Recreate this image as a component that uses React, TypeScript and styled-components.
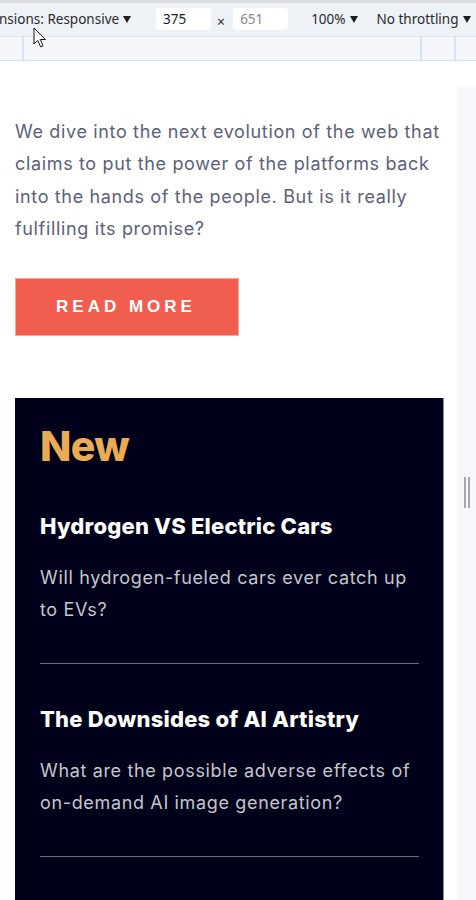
import React from "react";
import styled, { createGlobalStyle } from "styled-components";

const GlobalStyle = createGlobalStyle`
  html, body { margin: 0; padding: 0; background: #ffffff; }
  body { font-family: Inter, "Noto Sans", sans-serif; }
  * { box-sizing: border-box; }
`;

const Frame = styled.div`
  position: relative;
  width: 476px;
  height: 900px;
  overflow: hidden;
  display: flex;
  flex-direction: column;
  background: #ffffff;
`;

const DevToolbar = styled.div`
  height: 36px;
  flex: none;
  display: flex;
  align-items: center;
  background: #eef1f6;
  border-top: 3px solid #dadce0;
  font-family: "Noto Sans", "Open Sans", sans-serif;
  font-size: 13.5px;
  color: #2b2b2b;
  white-space: nowrap;
`;

const ToolLabel = styled.span<{ $ml?: number }>`
  display: inline-flex;
  align-items: center;
  gap: 4px;
  margin-left: ${(p) => p.$ml ?? 0}px;
  margin-top: -2px;
`;

const Caret = styled.span`
  width: 0;
  height: 0;
  border-left: 4.5px solid transparent;
  border-right: 4.5px solid transparent;
  border-top: 7px solid #1f1f1f;
  margin-top: 1px;
`;

const SizeInput = styled.span<{ $muted?: boolean; $ml: number }>`
  display: inline-flex;
  align-items: center;
  width: 55px;
  height: 22px;
  margin-left: ${(p) => p.$ml}px;
  margin-top: -2px;
  padding-left: 7px;
  background: #ffffff;
  border-radius: 4px;
  color: ${(p) => (p.$muted ? "#8a8a8a" : "#222")};
`;

const Times = styled.span`
  margin-left: 6px;
  margin-top: 4px;
  font-size: 14px;
  color: #333;
`;

const RulerBar = styled.div`
  height: 25px;
  flex: none;
  display: grid;
  grid-template-columns: 24px 398px 34px 1fr;
  background: #f4f6fb;
  border-top: 1px solid #dfe6f3;
  border-bottom: 1px solid #d3e1f8;
`;

const RulerCell = styled.div<{ $line?: boolean }>`
  border-right: ${(p) => (p.$line ? "2px solid #d6e4fb" : "none")};
`;

const Body = styled.div`
  flex: 1;
  display: flex;
  min-height: 0;
`;

const Page = styled.main`
  width: 457px;
  flex: none;
  padding: 55px 12px 0 15px;
  background: #ffffff;
`;

const SidePanel = styled.div`
  flex: 1;
  margin-top: 25px;
  background: #f7f8fc;
  display: flex;
  justify-content: center;
  padding-top: 391px;
`;

const Handle = styled.div`
  width: 6px;
  height: 31px;
  border-left: 2px solid #a7a7aa;
  border-right: 2px solid #a7a7aa;
`;

const Intro = styled.p`
  margin: 0;
  font-size: 18px;
  line-height: 32.4px;
  letter-spacing: 0.65px;
  color: #5d5f79;
  width: 430px;
`;

const ReadMore = styled.button`
  margin-top: 32px;
  width: 224px;
  height: 58px;
  border: 1px solid #f7a59c;
  background: #f15e50;
  color: #ffffff;
  font-family: "Liberation Sans", Arial, sans-serif;
  font-weight: 700;
  font-size: 17px;
  letter-spacing: 4px;
  padding: 0 2px 0 0;
  display: flex;
  align-items: center;
  justify-content: center;
`;

const NewPanel = styled.section`
  margin-top: 62px;
  width: 429px;
  background: #00001a;
  border-right: 1px solid #8e8e9c;
  padding: 24px 24px 0 25px;
  height: 520px;
`;

const NewTitle = styled.h2`
  margin: 0;
  font-size: 41px;
  line-height: 48px;
  font-weight: 800;
  color: #e9ab53;
  letter-spacing: -0.6px;
`;

const Item = styled.article<{ $first?: boolean }>`
  padding-top: ${(p) => (p.$first ? 43 : 42)}px;
  padding-bottom: 37px;
  border-bottom: 1px solid #6b6d82;
`;

const ItemTitle = styled.h3`
  margin: 0 0 22px;
  font-size: 22px;
  line-height: 27px;
  font-weight: 800;
  color: #ffffff;
  letter-spacing: 0.2px;
`;

const ItemText = styled.p`
  margin: 0;
  font-size: 18px;
  line-height: 32px;
  letter-spacing: 0.65px;
  color: #c5c6ce;
`;

const Cursor = styled.svg`
  position: absolute;
  left: 33px;
  top: 27px;
`;

const items = [
  {
    title: "Hydrogen VS Electric Cars",
    text: "Will hydrogen-fueled cars ever catch up to EVs?",
  },
  {
    title: "The Downsides of AI Artistry",
    text: "What are the possible adverse effects of on-demand AI image generation?",
  },
];

export default function App() {
  return (
    <>
      <GlobalStyle />
      <Frame>
        <DevToolbar>
          <ToolLabel $ml={-1}>
            nsions: Responsive <Caret />
          </ToolLabel>
          <SizeInput $ml={25}>375</SizeInput>
          <Times>×</Times>
          <SizeInput $ml={8} $muted>
            651
          </SizeInput>
          <ToolLabel $ml={23}>
            100% <Caret />
          </ToolLabel>
          <ToolLabel $ml={19}>
            No throttling <Caret />
          </ToolLabel>
        </DevToolbar>
        <RulerBar>
          <RulerCell $line />
          <RulerCell $line />
          <RulerCell $line />
          <RulerCell />
        </RulerBar>
        <Body>
          <Page>
            <Intro>
              We dive into the next evolution of the web that claims to put the
              power of the platforms back into the hands of the people. But is it
              really fulfilling its promise?
            </Intro>
            <ReadMore>READ MORE</ReadMore>
            <NewPanel>
              <NewTitle>New</NewTitle>
              {items.map((it, i) => (
                <Item key={it.title} $first={i === 0}>
                  <ItemTitle>{it.title}</ItemTitle>
                  <ItemText>{it.text}</ItemText>
                </Item>
              ))}
            </NewPanel>
          </Page>
          <SidePanel>
            <Handle />
          </SidePanel>
        </Body>
        <Cursor width="14" height="22" viewBox="0 0 14 22">
          <path
            d="M1 1 L1 17 L4.8 13.4 L7.6 19.8 L10 18.8 L7.3 12.5 L12.4 12.5 Z"
            fill="#ffffff"
            stroke="#111"
            strokeWidth="1"
            strokeLinejoin="round"
          />
        </Cursor>
      </Frame>
    </>
  );
}
